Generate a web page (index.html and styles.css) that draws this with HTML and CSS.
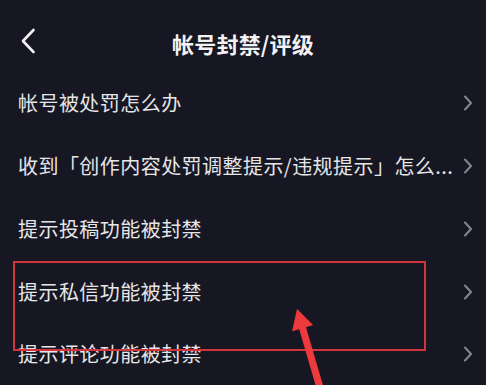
FILE: index.html
```html
<!DOCTYPE html>
<html lang="zh-CN">
<head>
<meta charset="utf-8">
<link rel="stylesheet" href="styles.css">
</head>
<body>
<div class="page">
  <header class="header">
    <span class="back">
      <svg width="16" height="26" viewBox="0 0 16 26"><path d="M13.5 2 L3 13 L13.5 24" fill="none" stroke="#f2f2f4" stroke-width="2.6" stroke-linecap="round" stroke-linejoin="round"/></svg>
    </span>
    <h1 class="title">帐号封禁/评级</h1>
  </header>
  <ul class="list">
    <li class="row"><span class="label">帐号被处罚怎么办</span><span class="chev"><svg width="10" height="16" viewBox="0 0 10 16"><path d="M2 1.5 L8 8 L2 14.5" fill="none" stroke="#85878e" stroke-width="2" stroke-linecap="round" stroke-linejoin="round"/></svg></span></li>
    <li class="row"><span class="label">收到「创作内容处罚调整提示/违规提示」怎么...</span><span class="chev"><svg width="10" height="16" viewBox="0 0 10 16"><path d="M2 1.5 L8 8 L2 14.5" fill="none" stroke="#85878e" stroke-width="2" stroke-linecap="round" stroke-linejoin="round"/></svg></span></li>
    <li class="row"><span class="label">提示投稿功能被封禁</span><span class="chev"><svg width="10" height="16" viewBox="0 0 10 16"><path d="M2 1.5 L8 8 L2 14.5" fill="none" stroke="#85878e" stroke-width="2" stroke-linecap="round" stroke-linejoin="round"/></svg></span></li>
    <li class="row"><span class="label">提示私信功能被封禁</span><span class="chev"><svg width="10" height="16" viewBox="0 0 10 16"><path d="M2 1.5 L8 8 L2 14.5" fill="none" stroke="#85878e" stroke-width="2" stroke-linecap="round" stroke-linejoin="round"/></svg></span></li>
    <li class="row"><span class="label">提示评论功能被封禁</span><span class="chev"><svg width="10" height="16" viewBox="0 0 10 16"><path d="M2 1.5 L8 8 L2 14.5" fill="none" stroke="#85878e" stroke-width="2" stroke-linecap="round" stroke-linejoin="round"/></svg></span></li>
  </ul>
  <div class="highlight"></div>
  <svg class="arrow" width="486" height="385" viewBox="0 0 486 385">
    <polygon points="297,309 313.1,325.1 306,327.2 324.1,389 317.3,391 299.2,329.2 292.1,331.3" fill="#ee3a3c"/>
  </svg>
</div>
</body>
</html>
```
FILE: styles.css
```css
html, body {
  margin: 0;
  padding: 0;
  background: #161722;
}
body {
  font-family: "Noto Sans CJK SC", "Noto Sans", sans-serif;
  color: #e8e8ea;
}
.page {
  position: relative;
  width: 486px;
  height: 385px;
  overflow: hidden;
  background: #161722;
}
.header {
  height: 72px;
  display: flex;
  align-items: center;
  justify-content: center;
  position: relative;
  padding-top: 14px;
  box-sizing: border-box;
}
.back {
  position: absolute;
  left: 20px;
  top: 28px;
  display: flex;
}
.title {
  margin: 0;
  font-size: 22px;
  font-weight: 700;
  color: #f2f2f4;
  line-height: 1;
  letter-spacing: 0.2px;
}
.list {
  list-style: none;
  margin: 0;
  padding: 0;
}
.row {
  height: 62.75px;
  display: flex;
  align-items: center;
  justify-content: space-between;
  padding: 0 13px 0 18px;
}
.label {
  font-size: 20px;
  letter-spacing: 0.45px;
  line-height: 1;
  white-space: nowrap;
  color: #e6e6e8;
}
.chev {
  display: flex;
}
.highlight {
  position: absolute;
  left: 13px;
  top: 261px;
  width: 413px;
  height: 90px;
  box-sizing: border-box;
  border: 2px solid #d2343d;
}
.arrow {
  position: absolute;
  left: 0;
  top: 0;
}
```
